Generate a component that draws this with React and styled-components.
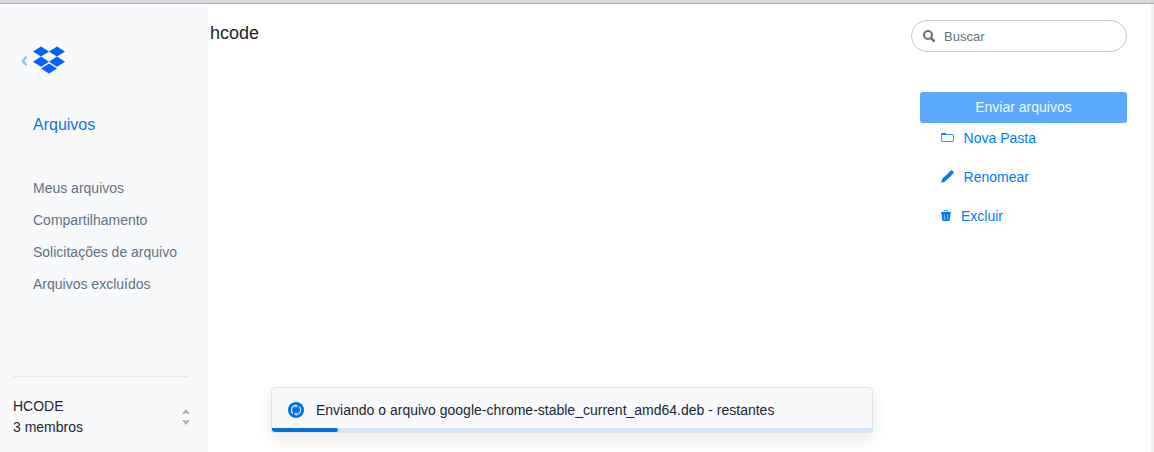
import React from "react";
import styled, { createGlobalStyle } from "styled-components";

const GlobalStyle = createGlobalStyle`
  * { box-sizing: border-box; }
  body { margin: 0; font-family: "Liberation Sans", Arial, sans-serif; font-size: 14px; background: #fff; }
  ul { list-style: none; margin: 0; padding: 0; }
  svg { display: block; flex: none; }
`;

const Page = styled.div`
  position: relative;
  display: flex;
  flex-direction: column;
  height: 452px;
  overflow: hidden;
`;

const WindowEdge = styled.div`
  flex: none;
  height: 4px;
  background: #d9d8df;
  border-bottom: 1px solid #acabb0;
`;

const Body = styled.div`
  flex: 1;
  display: flex;
`;

const Sidebar = styled.aside`
  width: 208px;
  display: flex;
  flex-direction: column;
  background: #f7f9fb;
`;

const Brand = styled.div`
  display: flex;
  align-items: flex-end;
  gap: 5px;
  padding: 0 0 0 21px;
  height: 70px;
`;

const BackLink = styled.a`
  padding-bottom: 8px;
`;

const SectionTitle = styled.a`
  margin: 41px 0 0 33px;
  font-size: 16px;
  line-height: 20px;
  color: #0f75e0;
`;

const Menu = styled.ul`
  padding: 37px 0 0 33px;
`;

const MenuItem = styled.li`
  line-height: 32px;
  color: #637282;
`;

const Team = styled.footer`
  display: flex;
  justify-content: space-between;
  margin: auto 20px 0 13px;
  height: 76px;
  padding: 19px 0 0;
  border-top: 1px solid #e6e8eb;
  line-height: 21px;
  color: #1b2733;
`;

const Sorter = styled.div`
  margin: 13px -2px 0 0;
`;

const Main = styled.main`
  flex: 1;
  padding: 17px 0 0 2px;
`;

const Title = styled.h1`
  margin: 0;
  font-size: 18px;
  font-weight: 400;
  line-height: 24px;
  color: #212529;
`;

const Tools = styled.section`
  width: 240px;
  padding: 16px 24px 0 0;
`;

const Search = styled.label`
  display: flex;
  align-items: center;
  gap: 9px;
  height: 32px;
  padding-left: 11px;
  border: 1px solid #c1c7cd;
  border-radius: 16px;
`;

const SearchInput = styled.input`
  flex: 1;
  min-width: 0;
  padding: 0;
  border: 0;
  outline: 0;
  background: transparent;
  font: 13px "Liberation Sans", Arial, sans-serif;
  &::placeholder { color: #637282; opacity: 1; }
`;

const UploadButton = styled.button`
  display: block;
  width: 207px;
  height: 31px;
  margin: 40px 0 0 9px;
  padding: 0 0 2px;
  border: 0;
  border-radius: 3px;
  background: #5ba9ff;
  color: #f2f8ff;
  font: 14px "Liberation Sans", Arial, sans-serif;
`;

const Action = styled.a`
  display: flex;
  align-items: center;
  gap: ${(p) => p.$gap || 9.6}px;
  height: 39px;
  margin-left: 30px;
  padding-bottom: 10px;
  color: #007bff;
`;

const ScrollTrack = styled.div`
  width: 3px;
  background: #f1f1f1;
`;

const Snackbar = styled.div`
  position: absolute;
  left: 271px;
  top: 387px;
  width: 602px;
  height: 46px;
  display: flex;
  flex-direction: column;
  overflow: hidden;
  border: 1px solid #dfe3e8;
  border-radius: 4px;
  background: #f7f9fb;
  box-shadow: 0 8px 18px rgba(27, 39, 51, 0.09);
`;

const Message = styled.div`
  flex: 1;
  display: flex;
  align-items: center;
  gap: 12px;
  padding: 4px 0 0 16px;
  color: #1b2733;
`;

const Track = styled.div`
  height: 4px;
  background: #d4e6fa;
`;

const Progress = styled.div`
  width: 11%;
  height: 4px;
  border-radius: 0 2px 2px 0;
  background: #0070e0;
`;

const ChevronLeft = () => (
  <svg width="7" height="10" viewBox="0 0 7 10" fill="none" stroke="#91c1f2" strokeWidth="2.3">
    <path d="M5.600.8 1.600 5l4 4.200" />
  </svg>
);

const Logo = () => (
  <svg width="32" height="28" viewBox="0 0 32 28" fill="#0061fe">
    <path d="M8 .4 16 5.500 8 10.600 0 5.500zM24 .4l8 5.100-8 5.100-8-5.100zM8 10.600l8 5.100-8 5.100-8-5.100zM24 10.600l8 5.100-8 5.100-8-5.100zM16 17.400l8 5.100-8 5.100-8-5.100z" />
  </svg>
);

const SortIcon = () => (
  <svg width="8" height="16" viewBox="0 0 8 16" fill="#afb1b3">
    <path d="M4 0 8 5H5.600L4 3.700 2.400 5H0zM4 16l4-5H5.600L4 12.300 2.400 11H0z" />
  </svg>
);

const SearchIcon = () => (
  <svg width="12" height="12" viewBox="0 0 12 12" fill="none" stroke="#637282">
    <circle cx="5" cy="5" r="4" strokeWidth="2.100" />
    <path d="m8 8 2.900 2.900" strokeWidth="2.500" strokeLinecap="round" />
  </svg>
);

const FolderIcon = () => (
  <svg width="13" height="9" viewBox="0 0 13 9">
    <path d="M.5 8V1q0-.5.5-.5h3.500l1 1H12q.5 0 .5.5v6q0 .5-.5.5H1Q.5 8.500.5 8z" fill="none" stroke="#3d9aff" />
    <path d="M.4.3h4.400L6 1.900H.4z" fill="#007bff" />
  </svg>
);

const PencilIcon = () => (
  <svg width="13" height="13" viewBox="0 0 13 13" fill="#007bff">
    <path d="m1.300 8.700 6.900-6.500 2.700 2.700L4 11.500 0 12.700zM8 2.400l1.900-1.800Q10.700 0 11.500.8l.8.8q.8.800 0 1.600l-1.800 1.700z" />
  </svg>
);

const TrashIcon = () => (
  <svg width="10" height="12" viewBox="0 0 10 12">
    <path d="M3 2V1q0-.5.5-.5h3Q7 .5 7 1v1" fill="none" stroke="#3d9aff" />
    <path d="M0 2h10v1.500H0zM.6 3.300h8.800L8.700 10.300q-.1.700-.8.700H2.100q-.7 0-.8-.7z" fill="#007bff" />
    <path d="M3.500 4.500V9.500M6.500 4.500V9.500" stroke="#9dccff" strokeWidth=".9" />
  </svg>
);

const SyncIcon = () => (
  <svg width="16" height="16" viewBox="0 0 16 16">
    <circle cx="8" cy="8" r="8" fill="#0070e0" />
    <path d="M5 11.500A4.600 4.600 0 0 1 7.200 3.500M11 4.500A4.600 4.600 0 0 1 8.800 12.500" fill="none" stroke="#c3ddf8" strokeWidth="1.300" />
    <path d="M6.800 2.200 10.200 3.500 7.700 6zM9.200 13.800 5.800 12.500 8.300 10z" fill="#c3ddf8" />
  </svg>
);

const links = ["Meus arquivos", "Compartilhamento", "Solicitações de arquivo", "Arquivos excluídos"];

export default function App() {
  return (
    <Page>
      <GlobalStyle />
      <WindowEdge />
      <Body>
        <Sidebar>
          <Brand><BackLink><ChevronLeft /></BackLink><Logo /></Brand>
          <SectionTitle>Arquivos</SectionTitle>
          <Menu>{links.map((label) => <MenuItem key={label}>{label}</MenuItem>)}</Menu>
          <Team>
            <div>HCODE<br />3 membros</div>
            <Sorter><SortIcon /></Sorter>
          </Team>
        </Sidebar>
        <Main><Title>hcode</Title></Main>
        <Tools>
          <Search><SearchIcon /><SearchInput placeholder="Buscar" /></Search>
          <UploadButton>Enviar arquivos</UploadButton>
          <Action><FolderIcon />Nova Pasta</Action>
          <Action><PencilIcon />Renomear</Action>
          <Action $gap={10}><TrashIcon />Excluir</Action>
        </Tools>
        <ScrollTrack />
      </Body>
      <Snackbar>
        <Message><SyncIcon />Enviando o arquivo google-chrome-stable_current_amd64.deb - restantes</Message>
        <Track><Progress /></Track>
      </Snackbar>
    </Page>
  );
}
